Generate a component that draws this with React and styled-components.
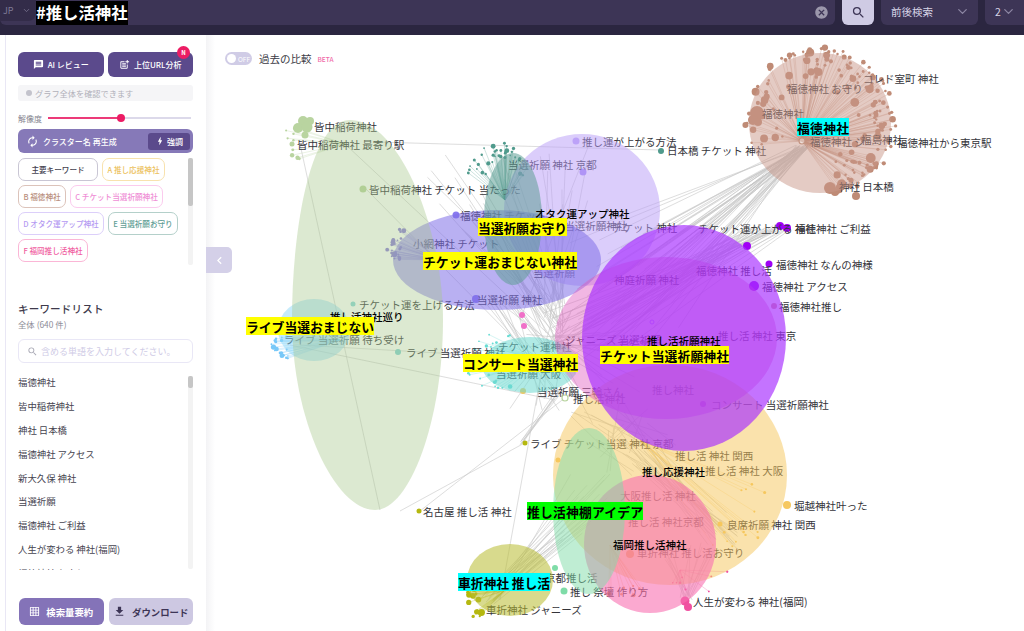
import React from "react";
import styled, { createGlobalStyle } from "styled-components";
import {
  MdMessage, MdPostAdd, MdAutorenew, MdBolt, MdSearch, MdCancel, MdGridOn, MdFileDownload, MdChevronLeft,
} from "react-icons/md";
import { ChevronDown } from "lucide-react";

const FONT = `"Noto Sans CJK JP", "Noto Sans", sans-serif`;

const GlobalStyle = createGlobalStyle`
  html, body { margin: 0; padding: 0; background: #fff; }
  * { box-sizing: border-box; }
  body { font-family: ${FONT}; }
`;

const Page = styled.div`
  width: 1024px;
  height: 631px;
  overflow: hidden;
  display: flex;
  flex-direction: column;
`;

/* ---------- header ---------- */
const Header = styled.header`
  flex: 0 0 35px;
  background: #2b2640;
  display: flex;
  gap: 7px;
  align-items: flex-start;
`;

const Field = styled.div`
  flex: 1;
  height: 25px;
  background: #3d3556;
  border-radius: 0 0 6px 6px;
  display: flex;
  align-items: center;
  padding-right: 6px;
`;

const Lang = styled.div`
  width: 36px;
  height: 21px;
  background: #332c49;
  border-radius: 0 0 8px 0;
  color: #7f7a96;
  font-size: 9px;
  display: flex;
  align-items: center;
  gap: 8px;
  padding-left: 3px;
  margin-bottom: 4px;
`;

const Tagline = styled.span`
  background: #000;
  color: #fff;
  font-size: 16.4px;
  font-weight: 700;
  height: 24px;
  line-height: 23px;
  padding: 0;
  white-space: nowrap;
`;

const SearchBtn = styled.button`
  width: 32px;
  height: 25px;
  border: 0;
  padding: 0;
  background: #cfcbe4;
  color: #3d3556;
  border-radius: 0 0 6px 6px;
  display: flex;
  align-items: center;
  justify-content: center;
`;

const Select = styled.div`
  width: ${(p) => p.$w}px;
  height: 25px;
  background: #3d3556;
  color: #d8d4e6;
  font-size: 10.5px;
  border-radius: ${(p) => (p.$last ? "0 0 0 6px" : "0 0 6px 6px")};
  padding: 0 0 3px 10px;
  display: flex;
  align-items: center;
  justify-content: space-between;
  svg { color: #8c86a3; margin-right: 8px; }
`;

/* ---------- sidebar ---------- */
const Main = styled.div`
  flex: 1;
  display: flex;
  min-height: 0;
`;

const Sidebar = styled.aside`
  width: 206px;
  flex: none;
  background: #fff;
  display: flex;
  flex-direction: column;
  padding: 17px 13px 6px 18px;
  position: relative;
  &::before {
    content: "";
    position: absolute;
    left: 5px;
    top: 0;
    bottom: 0;
    width: 1px;
    background: #e9e7f5;
  }
`;

const ButtonRow = styled.div`
  display: flex;
  gap: 4px;
`;

const PrimaryBtn = styled.button`
  flex: 1;
  position: relative;
  height: 25px;
  border: 0;
  padding: 0;
  background: #5b4a8c;
  color: #fff;
  font-family: ${FONT};
  font-size: 8px;
  font-weight: 500;
  border-radius: 6px;
  display: flex;
  align-items: center;
  justify-content: center;
  gap: 4px;
`;

const Badge = styled.span`
  position: absolute;
  right: 3px;
  top: -6px;
  width: 13px;
  height: 13px;
  border-radius: 50%;
  background: #ec1c64;
  color: #fff;
  font-size: 6px;
  font-weight: 700;
  display: flex;
  align-items: center;
  justify-content: center;
`;

const Info = styled.div`
  height: 16px;
  margin-top: 8px;
  background: #f5f5f7;
  border-radius: 3px;
  color: #b1b1ba;
  font-size: 8.2px;
  display: flex;
  align-items: center;
  gap: 3px;
  padding-left: 8px;
  &::before {
    content: "";
    width: 6px;
    height: 6px;
    border-radius: 50%;
    background: #c3c3cc;
  }
`;

const SliderRow = styled.div`
  height: 14px;
  margin-top: 10px;
  display: flex;
  align-items: center;
  gap: 6px;
  color: #85858f;
  font-size: 8px;
`;

const Track = styled.div`
  flex: 1;
  height: 2px;
  background: #dcd9ea;
  position: relative;
  margin-right: 2px;
`;

const TrackFill = styled.div`
  height: 100%;
  background: #ec3a78;
`;

const Thumb = styled.span`
  position: absolute;
  top: -3px;
  width: 8px;
  height: 8px;
  border-radius: 50%;
  background: #ec1c64;
  margin-left: -4px;
`;

const RegenBar = styled.div`
  height: 24px;
  margin-top: 4px;
  background: #8679b8;
  border-radius: 6px;
  color: #fff;
  font-size: 8px;
  font-weight: 500;
  display: flex;
  align-items: center;
  gap: 4px;
  padding: 0 3px 0 8px;
`;

const Boost = styled.span`
  margin-left: auto;
  width: 42px;
  height: 17px;
  background: #5b4a8c;
  border-radius: 3px;
  display: flex;
  align-items: center;
  justify-content: center;
  gap: 2px;
`;

const TagArea = styled.div`
  margin-top: 5px;
  height: 107px;
  display: flex;
  gap: 8px;
`;

const Tags = styled.div`
  flex: 1;
  display: flex;
  flex-wrap: wrap;
  align-content: flex-start;
  gap: 4px;
`;

const Tag = styled.span`
  width: ${(p) => p.$w}px;
  height: 23px;
  border: 1px solid ${(p) => p.$border};
  border-radius: 7px;
  color: ${(p) => p.$color};
  font-size: 7.6px;
  font-weight: 500;
  display: flex;
  align-items: center;
  justify-content: center;
  white-space: nowrap;
`;

const ScrollTrack = styled.div`
  flex: 0 0 5px;
  background: #f3f3f3;
  border-radius: 2px;
`;

const ScrollThumb = styled.div`
  height: ${(p) => p.$h}px;
  background: #c6c6c6;
  border-radius: 2px;
`;

const ListTitle = styled.h2`
  margin: 36px 0 0;
  font-size: 10.5px;
  line-height: 16px;
  font-weight: 500;
  letter-spacing: 0.2px;
  color: #3e3a4c;
`;

const ListCount = styled.div`
  margin-top: 2px;
  font-size: 8.4px;
  line-height: 10px;
  color: #8e8e98;
`;

const SearchBox = styled.div`
  margin-top: 10px;
  height: 24px;
  border: 1px solid #e9e7f6;
  border-radius: 6px;
  color: #cfcbe6;
  font-size: 9px;
  display: flex;
  align-items: center;
  gap: 3px;
  padding-left: 8px;
  svg { color: #a8a8b4; }
`;

const ListWrap = styled.div`
  margin-top: 8px;
  height: 199px;
  display: flex;
  gap: 8px;
  overflow: hidden;
`;

const KeywordList = styled.ul`
  flex: 1;
  list-style: none;
  margin: 0;
  padding: 0;
`;

const KeywordRow = styled.li`
  height: 23.9px;
  line-height: 23.9px;
  font-size: 9.4px;
  color: #45434f;
  white-space: nowrap;
`;

const ListScroll = styled(ScrollTrack)`
  margin-top: 5px;
  height: 193px;
`;

const BottomRow = styled.div`
  margin-top: auto;
  display: flex;
  gap: 5px;
  padding-left: 1px;
`;

const BottomBtn = styled.button`
  flex: 1;
  height: 27px;
  border: 0;
  padding: 0;
  border-radius: 6px;
  background: ${(p) => (p.$light ? "#cdc8e2" : "#8473b8")};
  color: ${(p) => (p.$light ? "#3d3556" : "#fff")};
  font-family: ${FONT};
  font-size: 9.4px;
  font-weight: 700;
  display: flex;
  align-items: center;
  justify-content: center;
  gap: 6px;
`;

/* ---------- chart ---------- */
const Chart = styled.section`
  flex: 1;
  position: relative;
  background: linear-gradient(90deg, #f3f3f5 0, #fff 9px);
`;

const ChartSvg = styled.svg`
  position: absolute;
  inset: 0;
  display: block;
  font-family: ${FONT};
`;

const Collapse = styled.button`
  position: absolute;
  left: 0;
  top: 212px;
  width: 26px;
  height: 26px;
  border: 0;
  padding: 0;
  background: #d4d0e8;
  color: #fff;
  border-radius: 0 5px 5px 0;
  display: flex;
  align-items: center;
  justify-content: center;
`;

const CompareBar = styled.div`
  position: absolute;
  left: 19px;
  top: 16px;
  display: flex;
  align-items: center;
  gap: 7px;
  font-size: 10.5px;
  color: #3a3a44;
`;

const Toggle = styled.span`
  width: 27px;
  height: 13px;
  border-radius: 7px;
  background: #d0cce6;
  color: #fff;
  font-size: 6.5px;
  display: flex;
  align-items: center;
  justify-content: flex-end;
  padding-right: 2px;
  position: relative;
  &::before {
    content: "";
    position: absolute;
    left: 2px;
    top: 2px;
    width: 9px;
    height: 9px;
    border-radius: 50%;
    background: #fff;
  }
`;

const Beta = styled.span`
  color: #f06aa8;
  font-size: 6.5px;
  font-weight: 500;
  margin-left: -1px;
`;

const NodeLabel = styled.text`
  font-size: 10.5px;
  fill: #34343a;
`;

const TitleLabel = styled.text`
  font-size: 10.5px;
  font-weight: 500;
  fill: #000;
`;

const ClusterLabel = styled.text`
  font-size: 12.8px;
  font-weight: 700;
  fill: #000;
`;

/* ---------- data ---------- */
const keywords = [
  "福徳神社", "皆中稲荷神社", "神社 日本橋", "福徳神社 アクセス", "新大久保 神社",
  "当選祈願", "福徳神社 ご利益", "人生が変わる 神社(福岡)", "福徳神社 お守り",
];

const tags = [
  { t: "主要キーワード", w: 80, b: "#c9c6d4", c: "#44424f" },
  { t: "A 推し応援神社", w: 63, b: "#f8e2ae", c: "#ecc25e" },
  { t: "B 福徳神社", w: 48, b: "#dcc3ba", c: "#b98f7e" },
  { t: "C チケット当選祈願神社", w: 93, b: "#fbcbee", c: "#ef8fd6" },
  { t: "D オタク運アップ神社", w: 86, b: "#dccffa", c: "#b59bf2" },
  { t: "E 当選祈願お守り", w: 70, b: "#b4d0ca", c: "#5f9e95" },
  { t: "F 福岡推し活神社", w: 70, b: "#fbb6d6", c: "#f0609f" },
];

const labels = [
  ["皆中稲荷神社", 314, 126], ["皆中稲荷神社 最寄り駅", 297, 144], ["皆中稲荷神社 チケット 当たった", 369, 189],
  ["コレド室町 神社", 863, 78], ["福徳神社 お守り", 787, 88], ["福徳神社", 762, 113],
  ["福徳神社 ジ", 810, 141], ["福島神社", 861, 139], ["福徳神社から東京駅", 897, 142], ["神社 日本橋", 839, 186],
  ["推し運が上がる方法", 582, 141], ["日本橋 チケット 神社", 667, 150], ["当選祈願 神社 京都", 508, 164],
  ["福徳神社 チケット", 460, 215], ["小網神社 チケット", 413, 243], ["チケット 当選祈願神社", 520, 225],
  ["チケット 神社", 612, 227], ["チケット運が上がる 神社", 698, 228], ["福徳神社 ご利益", 795, 228],
  ["福徳神社 なんの神様", 776, 264], ["福徳神社 推し活", 696, 270], ["神庭祈願 神社", 614, 279],
  ["福徳神社 アクセス", 762, 286], ["福徳神社推し", 779, 306], ["当選祈願", 533, 272],
  ["チケット運を上げる方法", 359, 304], ["当選祈願 神社", 477, 299], ["推し活 神社 東京", 718, 335],
  ["ジャニーズ 当選祈願", 565, 339], ["チケット", 617, 342], ["ライブ 当選祈願 待ち受け", 284, 339],
  ["ライブ 当選祈願 神社", 406, 352], ["チケット運神社", 498, 346], ["当選祈願 大阪", 496, 373],
  ["当選祈願 三輪さん", 537, 391], ["推し活神社", 573, 398], ["推し神社", 652, 389],
  ["コンサート 当選祈願神社", 711, 404], ["ライブ チケット当選 神社 京都", 530, 443], ["推し活 神社 関西", 675, 455],
  ["推し活 神社 大阪", 705, 470], ["大阪推し活 神社", 620, 495], ["名古屋 推し活 神社", 423, 511],
  ["推し活 神社京都", 628, 521], ["良席祈願 神社 関西", 727, 524], ["堀越神社叶った", 794, 505],
  ["車折神社 推し活お守り", 637, 552], ["京都推し活", 545, 577], ["推し 祭壇 作り方", 570, 591],
  ["車折神社 ジャニーズ", 486, 609], ["人生が変わる 神社(福岡)", 693, 601],
];

const titles = [
  ["オタク運アップ神社", 535, 213], ["推し活祈願神社", 647, 340], ["推し活神社巡り", 330, 316],
  ["推し応援神社", 642, 471], ["福岡推し活神社", 613, 544],
];

const clusters = [
  { t: "福徳神社", x: 797, y: 118, w: 52, bg: "#00ffff" },
  { t: "当選祈願お守り", x: 478, y: 218, w: 89, bg: "#ffff00" },
  { t: "チケット運おまじない神社", x: 423, y: 252, w: 154, bg: "#ffff00" },
  { t: "ライブ当選おまじない", x: 246, y: 317, w: 128, bg: "#ffff00" },
  { t: "コンサート当選神社", x: 463, y: 354, w: 115, bg: "#ffff00" },
  { t: "チケット当選祈願神社", x: 600, y: 346, w: 129, bg: "#ffff00" },
  { t: "推し活神棚アイデア", x: 527, y: 502, w: 116, bg: "#00ff00" },
  { t: "車折神社 推し活", x: 458, y: 573, w: 92, bg: "#00ffff" },
];

const GREEN_HULL = "M350 120 C400 120 443 230 443 320 C443 420 410 510 375 510 C335 510 292 420 292 320 C292 230 310 120 350 120 Z";

const hulls = [
  { cx: 582, cy: 210, rx: 78, ry: 76, fill: "#b89cf8", o: 0.5 },
  { cx: 497, cy: 260, rx: 104, ry: 50, fill: "#7f70e8", o: 0.55 },
  { cx: 513, cy: 219, rx: 29, ry: 66, fill: "#5f9e95", o: 0.55 },
  { cx: 530, cy: 365, rx: 48, ry: 28, fill: "#6fd8d0", o: 0.55 },
  { cx: 314, cy: 330, rx: 36, ry: 31, fill: "#8ed8f8", o: 0.5 },
  { cx: 820, cy: 123, rx: 71, ry: 70, fill: "#c9978a", o: 0.5 },
  { cx: 670, cy: 475, rx: 117, ry: 110, fill: "#f5c65a", o: 0.5 },
  { cx: 666, cy: 338, rx: 111, ry: 81, fill: "#e060c0", o: 0.45 },
  { cx: 684, cy: 338, rx: 102, ry: 113, fill: "#a830ff", o: 0.68 },
  { cx: 650, cy: 544, rx: 66, ry: 69, fill: "#f870b0", o: 0.6 },
  { cx: 589, cy: 511, rx: 36, ry: 83, fill: "#7fdca8", o: 0.5 },
  { cx: 510, cy: 580, rx: 43, ry: 36, fill: "#b8bb30", o: 0.55 },
];

const nodes = [
  [747, 246, 4, "#a000f5"], [780, 226, 4, "#a000f5"], [787, 228, 4, "#a000f5"], [769, 264, 3.5, "#a000f5"],
  [754, 286, 5, "#a000f5"], [476, 299, 4, "#8a7bf0"], [456, 215, 3.5, "#8a7bf0"], [583, 172, 3.5, "#a78cf5"],
  [576, 141, 3.5, "#c0a8f8"], [661, 151, 3, "#4f9a8c"], [398, 352, 3, "#7fd0d0"], [363, 189, 3.5, "#b8d49c"],
  [353, 304, 2.5, "#88d8d8"], [774, 306, 3, "#d99aa0"], [703, 404, 3, "#c040f0"], [523, 391, 3, "#f2c860"],
  [525, 443, 2.5, "#b5b810"], [419, 511, 2.5, "#b5b810"], [787, 505, 4, "#f6c860"], [720, 524, 2.5, "#f6c860"],
  [558, 460, 2.5, "#f6c860"], [630, 554, 4, "#f0a060"], [564, 591, 3.5, "#7fdca8"], [555, 568, 3, "#7fdca8"],
  [685, 601, 4.5, "#f050a0"], [688, 607, 4, "#f050a0"], [522, 315, 3, "#f070c8"], [524, 326, 3, "#f070c8"],
  // solid blobs of big nodes
  [757, 113, 7, "#bf8b76"], [753, 120, 5, "#bf8b76"], [758, 122, 4, "#bf8b76"], [830, 188, 6, "#bf8b76"],
  [835, 192, 4, "#bf8b76"], [856, 196, 4, "#bf8b76"], [303, 121, 5, "#b9d4a0"], [298, 128, 5, "#b9d4a0"],
  [307, 127, 5.5, "#b9d4a0"], [310, 121, 4, "#b9d4a0"], [305, 135, 3.5, "#b9d4a0"], [292, 144, 2.5, "#b9d4a0"],
];

const rngFrom = (seed) => () => {
  seed = (seed * 16807) % 2147483647;
  return (seed - 1) / 2147483646;
};

// dots spread round a centre, each one with a spoke back to the hub
const fan = (seed, hub, center, rMin, rMax, a0, a1, n, color, sMin, sMax) => {
  const r = rngFrom(seed);
  const out = [];
  for (let i = 0; i < n; i++) {
    const a = ((a0 + (a1 - a0) * r()) * Math.PI) / 180;
    const d = rMin + (rMax - rMin) * Math.sqrt(r());
    out.push({
      hub,
      x: center[0] + Math.cos(a) * d,
      y: center[1] + Math.sin(a) * d,
      s: sMin + r() * r() * sMax,
      color,
    });
  }
  return out;
};

const fans = [
  ...fan(11, [802, 141], [820, 123], 34, 76, -200, 75, 175, "#bf8b76", 1.2, 4),
  ...fan(19, [345, 144], [292, 146], 2, 20, 60, 300, 10, "#b9d4a0", 1, 1.5),
  ...fan(23, [505, 200], [497, 172], 8, 30, -190, 10, 40, "#4f9a8c", 0.8, 2),
  ...fan(29, [440, 260], [402, 245], 2, 16, 100, 280, 24, "#8a7ad8", 0.8, 2.5),
  ...fan(31, [340, 340], [284, 345], 2, 14, 60, 300, 20, "#78c8f8", 0.8, 3),
  ...fan(37, [540, 360], [496, 362], 6, 30, 60, 300, 26, "#68dcd4", 0.8, 1.6),
  ...fan(41, [505, 590], [478, 603], 2, 15, 70, 290, 14, "#b5b810", 0.8, 3.4),
  ...fan(43, [680, 570], [695, 560], 10, 40, 20, 140, 8, "#f050a0", 0.8, 1),
  ...fan(47, [640, 440], [730, 510], 10, 40, -60, 130, 16, "#f6c860", 0.8, 1),
  ...fan(53, [610, 545], [625, 580], 2, 22, 30, 160, 10, "#f0a060", 0.8, 2.5),
];

const greyLines = (() => {
  const r = rngFrom(71);
  const lines = [];
  const pick = (x0, y0, x1, y1, x2, y2, x3, y3, n) => {
    for (let i = 0; i < n; i++) {
      lines.push([x0 + (x1 - x0) * r(), y0 + (y1 - y0) * r(), x2 + (x3 - x2) * r(), y2 + (y3 - y2) * r()]);
    }
  };
  pick(796, 145, 808, 150, 560, 230, 700, 350, 50);
  pick(745, 232, 790, 225, 540, 310, 620, 360, 30);
  pick(540, 300, 565, 345, 420, 235, 600, 150, 36);
  pick(545, 335, 565, 350, 500, 300, 640, 430, 30);
  pick(480, 295, 540, 300, 580, 350, 540, 420, 16);
  pick(620, 440, 660, 470, 700, 510, 740, 550, 26);
  pick(650, 445, 570, 400, 600, 480, 680, 430, 24);
  pick(480, 605, 500, 590, 560, 470, 620, 540, 22);
  pick(680, 595, 695, 600, 655, 540, 720, 560, 14);
  pick(524, 440, 520, 445, 566, 385, 556, 395, 6);
  lines.push([300, 144, 380, 510], [345, 144, 560, 345], [290, 345, 555, 400], [366, 189, 520, 345]);
  lines.push([420, 511, 575, 390], [500, 600, 540, 380], [400, 511, 530, 440], [300, 345, 560, 360]);
  lines.push([375, 142, 660, 150], [590, 142, 520, 320]);
  return lines;
})();

const Graph = () => (
  <ChartSvg width="818" height="596" viewBox="206 35 818 596">
    <g stroke="#bdbdbd" strokeWidth="0.6" opacity="0.85">
      {greyLines.map((l, i) => (
        <line key={i} x1={l[0]} y1={l[1]} x2={l[2]} y2={l[3]} />
      ))}
    </g>
    {fans.map((d, i) => (
      <line key={i} x1={d.hub[0]} y1={d.hub[1]} x2={d.x} y2={d.y} stroke={d.color} strokeWidth="0.6" opacity="0.45" />
    ))}
    {fans.map((d, i) => (
      <circle key={i} cx={d.x} cy={d.y} r={d.s} fill={d.color} />
    ))}
    {nodes.map((n, i) => (
      <circle key={i} cx={n[0]} cy={n[1]} r={n[2]} fill={n[3]} />
    ))}
    {labels.map((l, i) => (
      <NodeLabel key={i} x={l[1]} y={l[2]} dominantBaseline="central">{l[0]}</NodeLabel>
    ))}
    {hulls.slice(0, 5).map((h, i) => (
      <ellipse key={i} cx={h.cx} cy={h.cy} rx={h.rx} ry={h.ry} fill={h.fill} opacity={h.o} />
    ))}
    <path d={GREEN_HULL} fill="#a8c98c" opacity="0.4" />
    {hulls.slice(5).map((h, i) => (
      <ellipse key={i} cx={h.cx} cy={h.cy} rx={h.rx} ry={h.ry} fill={h.fill} opacity={h.o} />
    ))}
    <circle cx="802" cy="141" r="3" fill="#fff" fillOpacity="0.4" stroke="#c49582" strokeWidth="1.2" />
    <circle cx="652" cy="322" r="2" fill="none" stroke="#b040ff" strokeWidth="0.8" />
    <circle cx="565" cy="398" r="3" fill="#fff" stroke="#b9d4a0" strokeWidth="1.2" />
    {titles.map((l, i) => (
      <TitleLabel key={i} x={l[1]} y={l[2]} dominantBaseline="central">{l[0]}</TitleLabel>
    ))}
    {clusters.map((c, i) => (
      <g key={i}>
        <rect x={c.x} y={c.y} width={c.w} height="18" fill={c.bg} />
        <ClusterLabel x={c.x} y={c.y + 9} dominantBaseline="central" textLength={c.w} lengthAdjust="spacing">
          {c.t}
        </ClusterLabel>
      </g>
    ))}
  </ChartSvg>
);

export default function App() {
  return (
    <Page>
      <GlobalStyle />
      <Header>
        <Field>
          <Lang>JP <ChevronDown size={9} /></Lang>
          <Tagline>#推し活神社</Tagline>
          <MdCancel size={15} color="#9b97ab" style={{ marginLeft: "auto" }} />
        </Field>
        <SearchBtn><MdSearch size={15} /></SearchBtn>
        <Select $w={97}>前後検索 <ChevronDown size={15} /></Select>
        <Select $w={39} $last>2 <ChevronDown size={15} /></Select>
      </Header>
      <Main>
        <Sidebar>
          <ButtonRow>
            <PrimaryBtn><MdMessage size={11} /> AI レビュー</PrimaryBtn>
            <PrimaryBtn><MdPostAdd size={11} /> 上位URL分析<Badge>N</Badge></PrimaryBtn>
          </ButtonRow>
          <Info>グラフ全体を確認できます</Info>
          <SliderRow>
            解像度
            <Track>
              <TrackFill style={{ width: "51%" }} />
              <Thumb style={{ left: "51%" }} />
            </Track>
          </SliderRow>
          <RegenBar>
            <MdAutorenew size={13} /> クラスター名 再生成
            <Boost><MdBolt size={10} /> 強調</Boost>
          </RegenBar>
          <TagArea>
            <Tags>
              {tags.map((t) => (
                <Tag key={t.t} $w={t.w} $border={t.b} $color={t.c}>{t.t}</Tag>
              ))}
            </Tags>
            <ScrollTrack><ScrollThumb $h={48} /></ScrollTrack>
          </TagArea>
          <ListTitle>キーワードリスト</ListTitle>
          <ListCount>全体 (640 件)</ListCount>
          <SearchBox><MdSearch size={11} /> 含める単語を入力してください。</SearchBox>
          <ListWrap>
            <KeywordList>
              {keywords.map((k) => (
                <KeywordRow key={k}>{k}</KeywordRow>
              ))}
            </KeywordList>
            <ListScroll><ScrollThumb $h={12} /></ListScroll>
          </ListWrap>
          <BottomRow>
            <BottomBtn><MdGridOn size={11} /> 検索量要約</BottomBtn>
            <BottomBtn $light><MdFileDownload size={13} /> ダウンロード</BottomBtn>
          </BottomRow>
        </Sidebar>
        <Chart>
          <Graph />
          <CompareBar>
            <Toggle>OFF</Toggle>
            過去の比較
            <Beta>BETA</Beta>
          </CompareBar>
          <Collapse><MdChevronLeft size={15} /></Collapse>
        </Chart>
      </Main>
    </Page>
  );
}
